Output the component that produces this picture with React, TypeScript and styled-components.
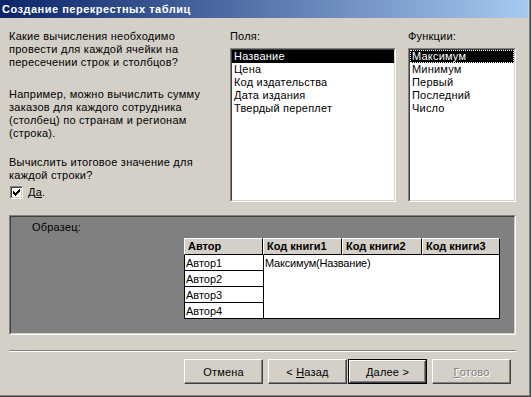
import React from "react";
import styled, { createGlobalStyle } from "styled-components";

const Global = createGlobalStyle`
  html, body { margin: 0; padding: 0; background: #D4D0C8; }
  body {
    font-family: "Liberation Sans", Arial, sans-serif;
    font-size: 11px;
    color: #000;
  }
  * { box-sizing: border-box; }
`;

const Window = styled.div`
  width: 531px;
  height: 397px;
  background: #d4d0c8;
  border-right: 1px solid #404040;
  border-bottom: 1px solid #404040;
  overflow: hidden;
`;

const Frame = styled.div`
  height: 100%;
  display: flex;
  flex-direction: column;
  border-right: 1px solid #808080;
  border-bottom: 1px solid #808080;
`;

const TitleBar = styled.div`
  height: 18px;
  margin-right: 1px;
  padding-left: 2px;
  background: linear-gradient(to right, #0a246a, #a6caf0);
  color: #fff;
  font-weight: bold;
  font-size: 11px;
  letter-spacing: 0.5px;
  line-height: 18px;
  white-space: nowrap;
`;

const TopArea = styled.div`
  display: flex;
  height: 184px;
  padding: 12px 0 0 9px;
`;

const Instructions = styled.div`
  width: 221px;
  line-height: 13px;
  letter-spacing: 0.25px;
`;

const Para = styled.p<{ $gap: number }>`
  margin: ${(p) => p.$gap}px 0 0;
`;

const CheckRow = styled.div`
  display: flex;
  align-items: center;
  gap: 5px;
  height: 13px;
  margin: 4px 0 0 1px;
`;

const CheckOuter = styled.span`
  width: 13px;
  height: 13px;
  border: 1px solid;
  border-color: #808080 #fff #fff #808080;
`;

const CheckInner = styled.span`
  display: flex;
  align-items: center;
  justify-content: center;
  width: 100%;
  height: 100%;
  background: #fff;
  border: 1px solid;
  border-color: #404040 #d4d0c8 #d4d0c8 #404040;
`;

const Accel = styled.span`
  text-decoration: underline;
  text-underline-offset: 1px;
`;

const ListColumn = styled.div<{ $width: number; $gapRight: number }>`
  display: flex;
  flex-direction: column;
  width: ${(p) => p.$width}px;
  margin-right: ${(p) => p.$gapRight}px;
`;

const ColumnLabel = styled.div`
  height: 13px;
  line-height: 13px;
  margin-bottom: 5px;
  letter-spacing: 0.2px;
`;

const ListOuter = styled.div`
  height: 154px;
  border: 1px solid;
  border-color: #808080 #fff #fff #808080;
`;

const ListInner = styled.div`
  height: 100%;
  background: #fff;
  border: 1px solid;
  border-color: #404040 #d4d0c8 #d4d0c8 #404040;
`;

const ListItem = styled.div<{ $selected?: boolean; $focused?: boolean }>`
  height: 13px;
  line-height: 13px;
  padding-left: 2px;
  letter-spacing: 0.2px;
  white-space: nowrap;
  background: ${(p) => (p.$selected ? "#000" : "transparent")};
  color: ${(p) => (p.$selected ? "#fff" : "#000")};
  outline: ${(p) => (p.$focused ? "1px dotted #fff" : "none")};
  outline-offset: -1px;
`;

const SampleOuter = styled.div`
  width: 507px;
  height: 120px;
  margin: 13px 0 0 9px;
  border: 1px solid;
  border-color: #808080 #fff #fff #808080;
`;

const SampleInner = styled.div`
  height: 100%;
  display: flex;
  flex-direction: column;
  align-items: flex-start;
  padding: 4px 0 0 21px;
  background: #808080;
  border: 1px solid;
  border-color: #404040 #d4d0c8 #d4d0c8 #404040;
`;

const SampleLabel = styled.div`
  line-height: 13px;
  letter-spacing: 0.2px;
`;

const SampleTable = styled.div`
  display: grid;
  grid-template-columns: 79px 79px 80px 78px;
  grid-template-rows: 17px repeat(4, 16px);
  margin: 4px 0 0 152px;
`;

const HeadCell = styled.div`
  background: #d4d0c8;
  border: 1px solid;
  border-color: #fff #000 #000 #fff;
  padding-left: 3px;
  font-weight: bold;
  line-height: 15px;
  white-space: nowrap;
  overflow: hidden;
`;

const RowCell = styled.div`
  background: #fff;
  border-left: 1px solid #000;
  border-bottom: 1px solid #000;
  padding: 2px 0 0 1px;
  line-height: 13px;
  white-space: nowrap;
`;

const DataCell = styled.div`
  grid-column: 2 / 5;
  grid-row: 2 / 6;
  background: #fff;
  border: 1px solid #000;
  border-top: none;
  padding: 2px 0 0 1px;
  line-height: 13px;
  letter-spacing: -0.2px;
  white-space: nowrap;
`;

const Separator = styled.div`
  width: 507px;
  margin: 15px 0 0 9px;
  border-top: 1px solid #808080;
  border-bottom: 1px solid #fff;
`;

const ButtonRow = styled.div`
  display: flex;
  margin-top: 7px;
  padding-left: 184px;
`;

const Button = styled.div<{ $default?: boolean; $gapRight?: number }>`
  width: 79px;
  height: 25px;
  margin-right: ${(p) => p.$gapRight ?? 0}px;
  border: ${(p) => (p.$default ? "1px solid #000" : "none")};
`;

const ButtonFace = styled.div<{ $disabled?: boolean }>`
  display: flex;
  align-items: center;
  justify-content: center;
  width: 100%;
  height: 100%;
  background: #d4d0c8;
  border: 1px solid;
  border-color: #fff #404040 #404040 #fff;
  box-shadow: inset -1px -1px 0 #808080;
  color: ${(p) => (p.$disabled ? "#808080" : "#000")};
  text-shadow: ${(p) => (p.$disabled ? "1px 1px 0 #fff" : "none")};
  letter-spacing: 0.2px;
  white-space: nowrap;
`;

const checkPixels = [
  "......#",
  ".....##",
  "#...###",
  "##.###.",
  "#####..",
  ".###...",
  "..#....",
];

const CheckMark = () => (
  <svg width="7" height="7" viewBox="0 0 7 7" shapeRendering="crispEdges">
    {checkPixels.flatMap((row, y) =>
      row.split("").map((c, x) =>
        c === "#" ? <rect key={`${x}-${y}`} x={x} y={y} width="1" height="1" fill="#000" /> : null
      )
    )}
  </svg>
);

const fields = ["Название", "Цена", "Код издательства", "Дата издания", "Твердый переплет"];
const functions = ["Максимум", "Минимум", "Первый", "Последний", "Число"];
const authors = ["Автор1", "Автор2", "Автор3", "Автор4"];
const headers = ["Автор", "Код книги1", "Код книги2", "Код книги3"];

export default function App() {
  return (
    <>
      <Global />
      <Window>
        <Frame>
          <TitleBar>Создание перекрестных таблиц</TitleBar>
          <TopArea>
            <Instructions>
              <Para $gap={0}>
                Какие вычисления необходимо
                <br />
                провести для каждой ячейки на
                <br />
                пересечении строк и столбцов?
              </Para>
              <Para $gap={19}>
                Например, можно вычислить сумму
                <br />
                заказов для каждого сотрудника
                <br />
                (столбец) по странам и регионам
                <br />
                (строка).
              </Para>
              <Para $gap={16}>
                Вычислить итоговое значение для
                <br />
                каждой строки?
              </Para>
              <CheckRow>
                <CheckOuter>
                  <CheckInner>
                    <CheckMark />
                  </CheckInner>
                </CheckOuter>
                <span>
                  Д<Accel>а</Accel>.
                </span>
              </CheckRow>
            </Instructions>
            <ListColumn $width={166} $gapRight={12}>
              <ColumnLabel>Поля:</ColumnLabel>
              <ListOuter>
                <ListInner>
                  {fields.map((f, i) => (
                    <ListItem key={f} $selected={i === 0}>
                      {f}
                    </ListItem>
                  ))}
                </ListInner>
              </ListOuter>
            </ListColumn>
            <ListColumn $width={108} $gapRight={0}>
              <ColumnLabel>Функции:</ColumnLabel>
              <ListOuter>
                <ListInner>
                  {functions.map((f, i) => (
                    <ListItem key={f} $selected={i === 0} $focused={i === 0}>
                      {f}
                    </ListItem>
                  ))}
                </ListInner>
              </ListOuter>
            </ListColumn>
          </TopArea>
          <SampleOuter>
            <SampleInner>
              <SampleLabel>Образец:</SampleLabel>
              <SampleTable>
                {headers.map((h) => (
                  <HeadCell key={h}>{h}</HeadCell>
                ))}
                {authors.map((a, i) => (
                  <RowCell key={a} style={{ gridColumn: 1, gridRow: i + 2 }}>
                    {a}
                  </RowCell>
                ))}
                <DataCell>Максимум(Название)</DataCell>
              </SampleTable>
            </SampleInner>
          </SampleOuter>
          <Separator />
          <ButtonRow>
            <Button $gapRight={5}>
              <ButtonFace>Отмена</ButtonFace>
            </Button>
            <Button $gapRight={1}>
              <ButtonFace>
                &lt;&nbsp;<Accel>Н</Accel>азад
              </ButtonFace>
            </Button>
            <Button $default $gapRight={5}>
              <ButtonFace>
                <Accel>Д</Accel>алее &gt;
              </ButtonFace>
            </Button>
            <Button>
              <ButtonFace $disabled>
                <Accel>Г</Accel>отово
              </ButtonFace>
            </Button>
          </ButtonRow>
        </Frame>
      </Window>
    </>
  );
}
